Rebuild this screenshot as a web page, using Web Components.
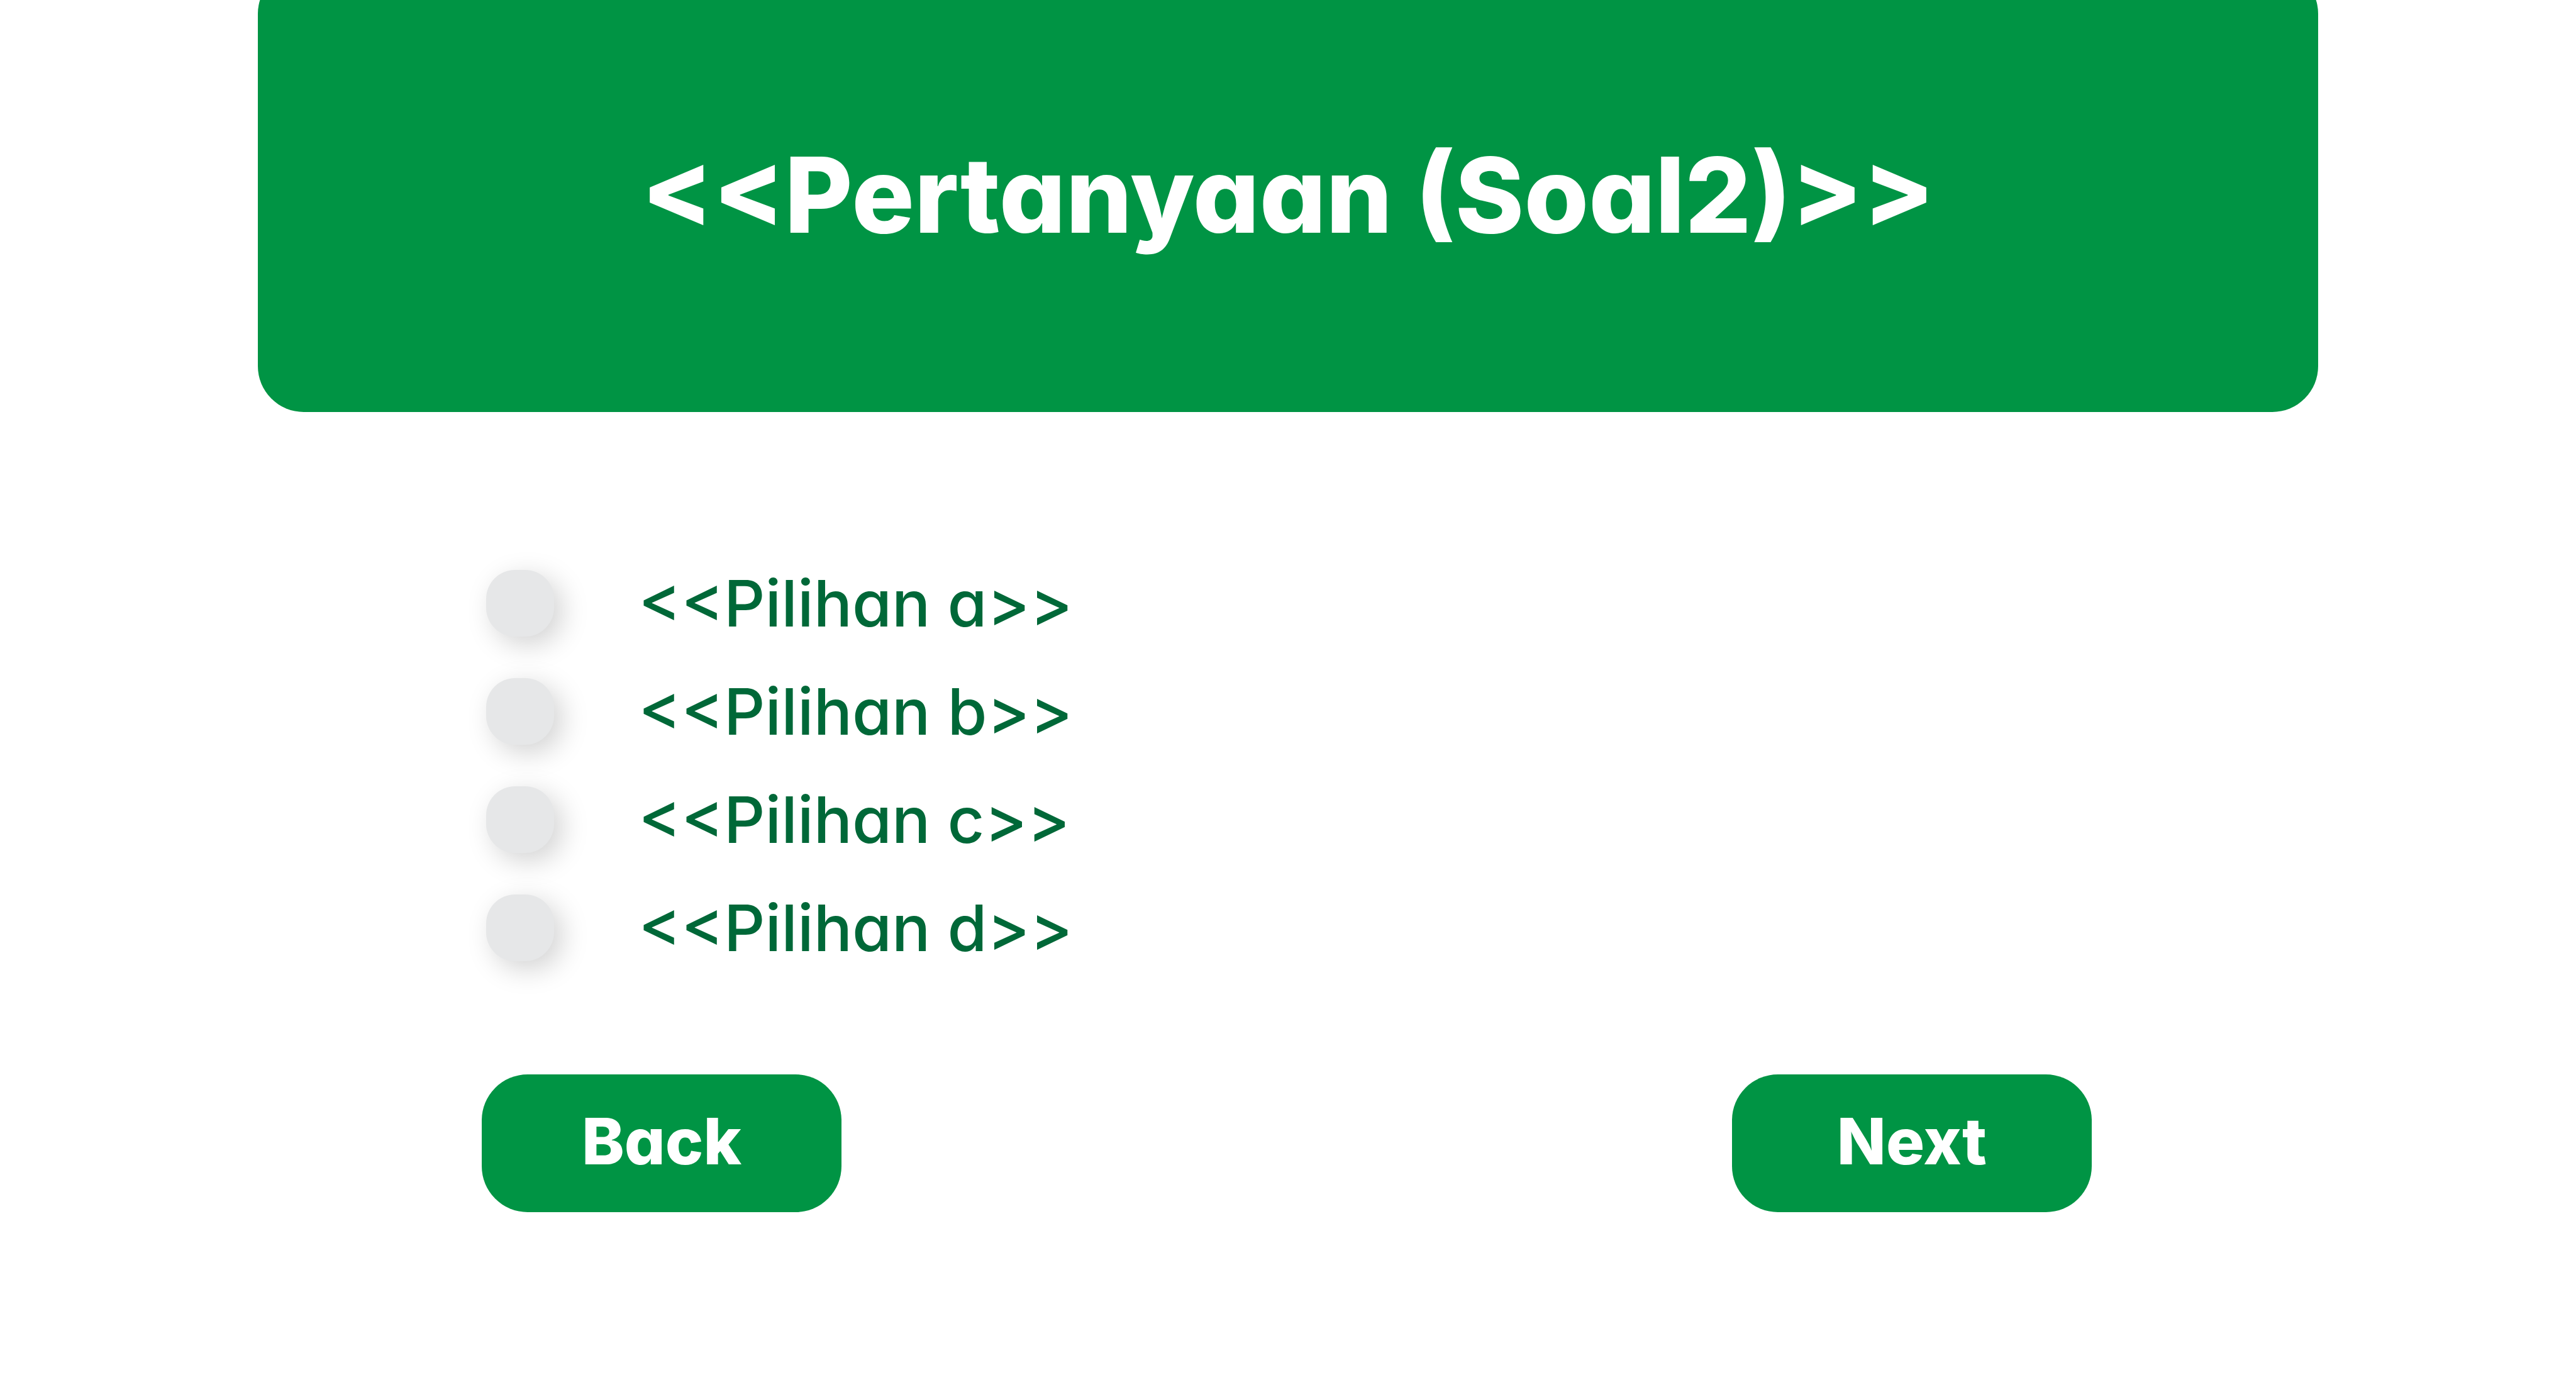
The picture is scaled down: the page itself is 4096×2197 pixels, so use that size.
<!DOCTYPE html>
<html lang="id">
<head>
<meta charset="utf-8">
<title>Kuis</title>
<style>
  body { margin: 0; background: #fff; font-family: Inter, "Open Sans", sans-serif; font-feature-settings: "cv11"; }
</style>
</head>
<body>
<quiz-page>
  <quiz-question slot="question">&lt;&lt;Pertanyaan (Soal2)&gt;&gt;</quiz-question>
  <quiz-option value="a">&lt;&lt;Pilihan a&gt;&gt;</quiz-option>
  <quiz-option value="b">&lt;&lt;Pilihan b&gt;&gt;</quiz-option>
  <quiz-option value="c">&lt;&lt;Pilihan c&gt;&gt;</quiz-option>
  <quiz-option value="d">&lt;&lt;Pilihan d&gt;&gt;</quiz-option>
  <quiz-button slot="actions">Back</quiz-button>
  <quiz-button slot="actions">Next</quiz-button>
</quiz-page>

<template id="page-template">
  <style>
    :host { display: block; --green: #009444; --ink: #006838; }
    .body { display: flex; flex-direction: column; gap: 147px; padding: 218px 18.8% 0 18.7%; }
    .options { display: flex; flex-direction: column; }
    nav { display: flex; justify-content: space-between; }
  </style>
  <main>
    <slot name="question"></slot>
    <div class="body">
      <div class="options" role="radiogroup" aria-label="Pilihan"><slot></slot></div>
      <nav><slot name="actions"></slot></nav>
    </div>
  </main>
</template>

<template id="question-template">
  <style>
    :host { display: flow-root; }
    header { display: flex; align-items: center; justify-content: center; box-sizing: border-box;
      min-height: 706px; margin: -51px 10% 0; padding-top: 16px; border-radius: 73px; background: var(--green); }
    h1 { margin: 0; color: #fff; font-size: 166px; font-weight: 800; line-height: 200px; text-align: center; }
  </style>
  <header><h1><slot></slot></h1></header>
</template>

<template id="option-template">
  <style>
    :host { display: block; }
    label { display: flex; align-items: center; gap: 134px; min-height: 172px; padding-left: 7px;
      color: var(--ink); font-size: 102px; font-weight: 500; line-height: 120px; cursor: pointer; }
    input { appearance: none; flex: none; width: 108px; height: 106px; margin: 0; border-radius: 46px;
      background: #e6e7e8; box-shadow: 12px 12px 44px rgba(0, 0, 0, .18); cursor: pointer; }
    input:checked { background: var(--green); }
  </style>
  <label><input type="radio" name="answer"><span><slot></slot></span></label>
</template>

<template id="button-template">
  <style>
    :host { display: block; }
    button { display: block; min-width: 572px; height: 219px; padding: 0 40px 8px; border: 0; border-radius: 73px;
      background: var(--green); color: #fff; font: inherit; font-feature-settings: inherit;
      font-size: 102px; font-weight: 800; line-height: 120px; cursor: pointer; }
  </style>
  <button type="button"><slot></slot></button>
</template>

<script>
  class QuizElement extends HTMLElement {
    constructor() {
      super();
      const template = document.getElementById(this.constructor.template);
      this.attachShadow({ mode: "open" }).append(template.content.cloneNode(true));
    }
  }
  class QuizPage extends QuizElement { static template = "page-template"; }
  class QuizQuestion extends QuizElement { static template = "question-template"; }
  class QuizButton extends QuizElement { static template = "button-template"; }
  class QuizOption extends QuizElement {
    static template = "option-template";
    connectedCallback() {
      const input = this.shadowRoot.querySelector("input");
      input.value = this.getAttribute("value");
      // Each radio lives in its own shadow tree, so the group is kept exclusive here.
      input.addEventListener("change", () => {
        for (const other of this.parentElement.querySelectorAll("quiz-option"))
          if (other !== this) other.shadowRoot.querySelector("input").checked = false;
      });
    }
  }
  customElements.define("quiz-page", QuizPage);
  customElements.define("quiz-question", QuizQuestion);
  customElements.define("quiz-option", QuizOption);
  customElements.define("quiz-button", QuizButton);
</script>
</body>
</html>
